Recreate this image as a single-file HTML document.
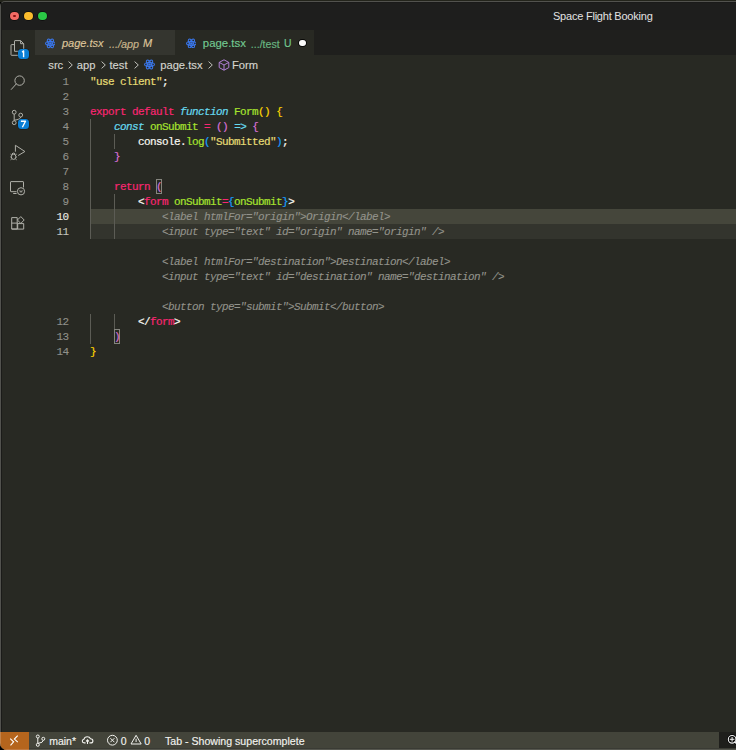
<!DOCTYPE html>
<html><head><meta charset="utf-8">
<style>
*{margin:0;padding:0;box-sizing:border-box}
html,body{width:736px;height:750px;overflow:hidden;background:#000}
#clip{position:absolute;left:0;top:0;width:736px;height:750px;clip-path:inset(1px 0 0 0 round 5px 0 0 7px)}
body{position:relative;font-family:"Liberation Sans",sans-serif}
.a{position:absolute}
#frame{left:0;top:1px;width:800px;height:760px;background:#52524e}
#title{left:1px;top:2px;width:800px;height:28px;background:#1e1e1d;border-top-left-radius:4px;border-top:1px solid #1a1a19}
.tl{position:absolute;width:8.8px;height:8.8px;border-radius:50%;box-shadow:0 0 0 0.7px rgba(0,0,0,.6)}
#titletxt{left:553px;top:10px;font-size:11px;letter-spacing:-0.22px;color:#e2e2e2;white-space:nowrap}
#act{left:1px;top:30px;width:34px;height:702px;background:#282923}
#tabs{left:35px;top:30px;width:766px;height:25px;background:#1f1f1d}
.tab{position:absolute;top:0;height:25px;font-size:11px;white-space:nowrap}
#editor{left:35px;top:55px;width:766px;height:677px;background:#282923}
#status{left:0;top:731.5px;width:800px;height:20px;background:#43443a}
.mono{font-family:"Liberation Mono",monospace;font-size:11px;letter-spacing:-0.6px;line-height:15px;-webkit-text-stroke:0.2px;white-space:pre}
.ln{position:absolute;left:35px;width:33.5px;text-align:right;color:#90908a}
.row{transform:scaleY(1.06);transform-origin:0 10.4px}
.row.gh{transform:none}
.ln{transform:scaleY(1.03);transform-origin:0 10.4px}
.row{position:absolute;left:90px;color:#f8f8f2}
.k{color:#f92672}.s{color:#e6db74}.i{color:#66d9ef;font-style:italic}.g{color:#a6e22e}.w{color:#f8f8f2}.c{color:#66d9ef}
.b1{color:#ffd700}.b2{color:#da70d6}.b3{color:#179fff}
.gh{color:#93938b;font-style:italic;-webkit-text-stroke:0.1px}
.ln{-webkit-text-stroke:0.1px}
.guide{position:absolute;width:1px;background:#5c5c55}
</style></head><body>
<div class="a" style="left:0;top:0;width:736px;height:2px;background:#23241b"></div><div id="clip"><div id="frame" class="a"></div>
<div id="title" class="a"></div>
<div class="tl" style="left:10.1px;top:11.5px;background:#f26a64"></div>
<div class="tl" style="left:24.0px;top:11.5px;background:#fbbc2d"></div>
<div class="tl" style="left:37.9px;top:11.5px;background:#2ac845"></div>
<div class="a" style="left:13.4px;top:14.8px;width:2.3px;height:2.3px;border-radius:50%;background:#8a1010"></div>
<div id="titletxt" class="a">Space Flight Booking</div>
<div id="act" class="a"></div>
<div class="a" style="left:1px;top:3px;width:1px;height:729px;background:#1b1b19"></div>
<div id="tabs" class="a"><div class="tab" style="left:0;width:140px;background:#34352f"></div><div class="tab" style="left:140px;width:139px;background:#282923"></div></div>
<div id="editor" class="a"></div>
<div class="a" style="left:90px;top:208.5px;width:700px;height:15px;background:#45463b"></div>
<div class="a" style="left:90px;top:223.5px;width:700px;height:15px;background:#33342d"></div>
<div class="guide" style="left:90px;top:118.5px;height:120px"></div>
<div class="guide" style="left:90px;top:313.5px;height:30px"></div>
<div class="guide" style="left:114px;top:133.5px;height:15px"></div>
<div class="guide" style="left:114px;top:193.5px;height:45px"></div>
<div class="guide" style="left:114px;top:313.5px;height:30px"></div>
<div class="a" style="left:156px;top:178.5px;width:6px;height:15px;border:1px solid #85857e"></div>
<div class="a" style="left:114px;top:328.5px;width:6px;height:15px;border:1px solid #85857e"></div>
<div class="mono">
<div class="ln" style="top:75.0px">1</div>
<div class="ln" style="top:90.0px">2</div>
<div class="ln" style="top:105.0px">3</div>
<div class="ln" style="top:120.0px">4</div>
<div class="ln" style="top:135.0px">5</div>
<div class="ln" style="top:150.0px">6</div>
<div class="ln" style="top:165.0px">7</div>
<div class="ln" style="top:180.0px">8</div>
<div class="ln" style="top:195.0px">9</div>
<div class="ln" style="top:210.0px;color:#ececE6">10</div>
<div class="ln" style="top:225.0px;color:#c4c4be">11</div>
<div class="ln" style="top:315.0px">12</div>
<div class="ln" style="top:330.0px">13</div>
<div class="ln" style="top:345.0px">14</div>
<div class="row" style="top:75.0px"><span class="s">"use client"</span>;</div>
<div class="row" style="top:105.0px"><span class="k">export</span> <span class="k">default</span> <span class="i">function</span> <span class="g">Form</span><span class="b1">()</span> <span class="b1">{</span></div>
<div class="row" style="top:120.0px">    <span class="i">const</span> <span class="g">onSubmit</span> <span class="k">=</span> <span class="b2">()</span> <span class="c">=&gt;</span> <span class="b2">{</span></div>
<div class="row" style="top:135.0px">        console.<span class="g">log</span><span class="b3">(</span><span class="s">"Submitted"</span><span class="b3">)</span>;</div>
<div class="row" style="top:150.0px">    <span class="b2">}</span></div>
<div class="row" style="top:180.0px">    <span class="k">return</span> <span class="b2">(</span></div>
<div class="row" style="top:195.0px">        &lt;<span class="k">form</span> <span class="g">onSubmit</span><span class="k">=</span><span class="b3">{</span><span class="g">onSubmit</span><span class="b3">}</span>&gt;</div>
<div class="row" style="top:315.0px">        &lt;/<span class="k">form</span>&gt;</div>
<div class="row" style="top:330.0px">    <span class="b2">)</span></div>
<div class="row" style="top:345.0px"><span class="b1">}</span></div>
<div class="row gh" style="top:210.0px">            &lt;label htmlFor="origin"&gt;Origin&lt;/label&gt;</div>
<div class="row gh" style="top:225.0px">            &lt;input type="text" id="origin" name="origin" /&gt;</div>
<div class="row gh" style="top:255.0px">            &lt;label htmlFor="destination"&gt;Destination&lt;/label&gt;</div>
<div class="row gh" style="top:270.0px">            &lt;input type="text" id="destination" name="destination" /&gt;</div>
<div class="row gh" style="top:300.0px">            &lt;button type="submit"&gt;Submit&lt;/button&gt;</div>
</div>
<div id="status" class="a"><div class="a" style="left:0;top:0;width:28.5px;height:20px;background:#b5651d"></div></div>
<svg class="a" style="left:0px;top:30px" width="36" height="36" viewBox="0 0 36 36"><path fill="none" stroke="#b0b0a9" stroke-width="1" d="M14.5 14.6 H11.5 Q11 14.6 11 15.1 V24.8 Q11 25.3 11.5 25.3 H18.5"/><path fill="none" stroke="#b0b0a9" stroke-width="1" d="M14.5 21.3 V11.1 Q14.5 10.6 15 10.6 H20.6 L23.7 13.7 V21.3 Z"/><path fill="none" stroke="#b0b0a9" stroke-width="1" d="M20.6 10.6 V13.7 H23.7"/></svg>
<svg class="a" style="left:0px;top:66px" width="36" height="36" viewBox="0 0 36 36"><circle fill="none" stroke="#b0b0a9" stroke-width="1" cx="19.6" cy="14.6" r="4.7"/><path fill="none" stroke="#b0b0a9" stroke-width="1" stroke-linecap="round" d="M16.2 18 L11.3 23.4"/></svg>
<svg class="a" style="left:0px;top:102px" width="36" height="36" viewBox="0 0 36 36"><circle fill="none" stroke="#b0b0a9" stroke-width="1" cx="14.2" cy="10.2" r="1.9"/><circle fill="none" stroke="#b0b0a9" stroke-width="1" cx="14.2" cy="20.7" r="1.9"/><circle fill="none" stroke="#b0b0a9" stroke-width="1" cx="20.7" cy="13.1" r="1.9"/><path fill="none" stroke="#b0b0a9" stroke-width="1" d="M14.2 12.1 V18.8"/><path fill="none" stroke="#b0b0a9" stroke-width="1" d="M20.7 15 Q20.7 17.5 14.2 18.2"/></svg>
<svg class="a" style="left:0px;top:138px" width="36" height="36" viewBox="0 0 36 36"><path fill="none" stroke="#b0b0a9" stroke-width="1" stroke-linejoin="round" d="M15.4 13.7 V7.3 L24.9 13.5 L18.2 17.5"/><ellipse fill="none" stroke="#b0b0a9" stroke-width="1" cx="13.6" cy="18.8" rx="2.3" ry="2.6"/><path fill="none" stroke="#b0b0a9" stroke-width="1" d="M10.6 16.2 L11.8 17 M16.6 16.2 L15.4 17 M10.4 19 H11.3 M16.8 19 H15.9 M10.6 21.8 L11.7 21 M16.6 21.8 L15.5 21 M12 15.7 Q13.6 14.4 15.2 15.7"/></svg>
<svg class="a" style="left:0px;top:174px" width="36" height="36" viewBox="0 0 36 36"><path fill="none" stroke="#b0b0a9" stroke-width="1" d="M16.5 17.7 H11 Q10.5 17.7 10.5 17.2 V8.1 Q10.5 7.6 11 7.6 H23 Q23.5 7.6 23.5 8.1 V13.5"/><path fill="none" stroke="#b0b0a9" stroke-width="1" d="M13.2 19.5 H16.6"/><circle fill="none" stroke="#b0b0a9" stroke-width="1" cx="21" cy="17.3" r="3.6"/><path stroke="#b0b0a9" stroke-width="0.7" fill="none" d="M19.7 16.2 L20.4 18.3 L21 16.8 L21.6 18.3 L22.3 16.2"/></svg>
<svg class="a" style="left:0px;top:210px" width="36" height="36" viewBox="0 0 36 36"><path fill="none" stroke="#b0b0a9" stroke-width="1" d="M11.7 7.6 H17.2 V19 H11.7 Z M11.7 13.1 H17.7 M11.7 19.1 H23.7 V13.6 H17.7 V19.1"/><path fill="none" stroke="#b0b0a9" stroke-width="1" d="M20.8 6.6 L24.2 10 L20.8 13.4 L17.4 10 Z"/></svg>
<div class="a" style="left:18.2px;top:48.8px;width:10.4px;height:10.4px;border-radius:3.5px;background:#0a7fd6;box-shadow:0 0 0 0.6px rgba(0,0,0,.35)"></div>
<svg class="a" style="left:18.2px;top:48.8px" width="10.4" height="10.4" viewBox="0 0 10.4 10.4"><path d="M4.1 3.2 L5.6 1.9 V8.3" fill="none" stroke="#fff" stroke-width="1.4" stroke-linejoin="round"/></svg>
<div class="a" style="left:18.2px;top:118.7px;width:10.4px;height:10.4px;border-radius:3.5px;background:#0a7fd6;box-shadow:0 0 0 0.6px rgba(0,0,0,.35)"></div>
<svg class="a" style="left:18.2px;top:118.7px" width="10.4" height="10.4" viewBox="0 0 10.4 10.4"><path d="M2.9 2.3 H7.5 L4.4 8.3" fill="none" stroke="#fff" stroke-width="1.4" stroke-linejoin="round"/></svg>
<svg class="a" style="left:44.7px;top:37.800000000000004px" width="10.8" height="10.8" viewBox="0 0 24 24"><g fill="none" stroke="#3a78ef" stroke-width="2.3"><ellipse cx="12" cy="12" rx="10.8" ry="4.3"/><ellipse cx="12" cy="12" rx="10.8" ry="4.3" transform="rotate(60 12 12)"/><ellipse cx="12" cy="12" rx="10.8" ry="4.3" transform="rotate(120 12 12)"/></g><circle cx="12" cy="12" r="2.8" fill="#3a78ef"/></svg>
<svg class="a" style="left:185.7px;top:37.6px" width="10.8" height="10.8" viewBox="0 0 24 24"><g fill="none" stroke="#3a78ef" stroke-width="2.3"><ellipse cx="12" cy="12" rx="10.8" ry="4.3"/><ellipse cx="12" cy="12" rx="10.8" ry="4.3" transform="rotate(60 12 12)"/><ellipse cx="12" cy="12" rx="10.8" ry="4.3" transform="rotate(120 12 12)"/></g><circle cx="12" cy="12" r="2.8" fill="#3a78ef"/></svg>
<div class="a" style="left:62px;top:37px;white-space:nowrap;-webkit-text-stroke:0.15px;font-size:11px;font-style:italic;color:#dec59a">page.tsx</div>
<div class="a" style="left:109px;top:37.6px;white-space:nowrap;-webkit-text-stroke:0.15px;font-size:10.8px;font-style:italic;color:#dec59a;opacity:.88">.../app</div>
<div class="a" style="left:143px;top:37px;white-space:nowrap;-webkit-text-stroke:0.15px;font-size:11px;font-style:italic;color:#dec59a">M</div>
<div class="a" style="left:202.8px;top:37px;white-space:nowrap;-webkit-text-stroke:0.15px;font-size:11.4px;color:#73c991">page.tsx</div>
<div class="a" style="left:250.8px;top:37.6px;white-space:nowrap;-webkit-text-stroke:0.15px;font-size:10.6px;color:#73c991;opacity:.88">.../test</div>
<div class="a" style="left:284px;top:37.5px;white-space:nowrap;-webkit-text-stroke:0.15px;font-size:10.4px;color:#73c991">U</div>
<div class="a" style="left:299.4px;top:39.6px;width:6.8px;height:6.8px;border-radius:50%;background:#fafafa;box-shadow:0 0 0 0.8px #000"></div>
<div class="a" style="left:48.3px;top:58.5px;white-space:nowrap;-webkit-text-stroke:0.15px;font-size:11.2px;color:#d4d4ce">src</div>
<div class="a" style="left:76.8px;top:58.5px;white-space:nowrap;-webkit-text-stroke:0.15px;font-size:11.2px;color:#d4d4ce">app</div>
<div class="a" style="left:109.5px;top:58.5px;white-space:nowrap;-webkit-text-stroke:0.15px;font-size:11.2px;color:#d4d4ce">test</div>
<div class="a" style="left:160.2px;top:58.5px;white-space:nowrap;-webkit-text-stroke:0.15px;font-size:11.2px;color:#d4d4ce">page.tsx</div>
<div class="a" style="left:232px;top:58.5px;white-space:nowrap;-webkit-text-stroke:0.15px;font-size:11.2px;color:#d4d4ce">Form</div>
<svg class="a" style="left:68.4px;top:61px" width="5" height="8" viewBox="0 0 5 8"><path fill="none" stroke="#d4d4ce" stroke-width="0.9" d="M0.6 0.6 L4.3 4 L0.6 7.4"/></svg>
<svg class="a" style="left:100.9px;top:61px" width="5" height="8" viewBox="0 0 5 8"><path fill="none" stroke="#d4d4ce" stroke-width="0.9" d="M0.6 0.6 L4.3 4 L0.6 7.4"/></svg>
<svg class="a" style="left:133.5px;top:61px" width="5" height="8" viewBox="0 0 5 8"><path fill="none" stroke="#d4d4ce" stroke-width="0.9" d="M0.6 0.6 L4.3 4 L0.6 7.4"/></svg>
<svg class="a" style="left:208.3px;top:61px" width="5" height="8" viewBox="0 0 5 8"><path fill="none" stroke="#d4d4ce" stroke-width="0.9" d="M0.6 0.6 L4.3 4 L0.6 7.4"/></svg>
<svg class="a" style="left:143.8px;top:59.3px" width="11" height="11" viewBox="0 0 24 24"><g fill="none" stroke="#3a78ef" stroke-width="2.3"><ellipse cx="12" cy="12" rx="10.8" ry="4.3"/><ellipse cx="12" cy="12" rx="10.8" ry="4.3" transform="rotate(60 12 12)"/><ellipse cx="12" cy="12" rx="10.8" ry="4.3" transform="rotate(120 12 12)"/></g><circle cx="12" cy="12" r="2.8" fill="#3a78ef"/></svg>
<svg class="a" style="left:217.5px;top:58.5px" width="12" height="12" viewBox="0 0 12 12"><g fill="none" stroke="#b180d7" stroke-width="1" stroke-linejoin="round"><path d="M6 0.8 L10.8 3.4 V8.6 L6 11.2 L1.2 8.6 V3.4 Z"/><path d="M1.2 3.4 L6 6 L10.8 3.4 M6 6 V11.2"/></g></svg>
<svg class="a" style="left:0px;top:731.5px" width="29" height="19" viewBox="0 0 29 19"><path fill="none" stroke="#fff" stroke-width="1.1" d="M10.2 6.7 L13.6 9.9 L10.5 13.3 M17.7 3.7 L14.4 7.1 L17.8 10.2"/></svg>
<svg class="a" style="left:30px;top:730.5px" width="20" height="19" viewBox="0 0 20 19"><g fill="none" stroke="#f2f2ee" stroke-width="1"><circle cx="7.8" cy="5.5" r="1.5"/><circle cx="7.8" cy="13.8" r="1.5"/><circle cx="13.3" cy="7.8" r="1.5"/><path d="M7.8 7 V12.3 M13.3 9.3 Q13.3 11.8 7.9 12.4"/></g></svg>
<div class="a" style="left:49.2px;top:735px;white-space:nowrap;-webkit-text-stroke:0.15px;font-size:10.5px;color:#f2f2ee">main*</div>
<svg class="a" style="left:80px;top:731.3px" width="16" height="19" viewBox="0 0 16 19"><g fill="none" stroke="#f2f2ee" stroke-width="1.1"><path d="M5.6 11.9 H4.2 Q2.3 11.9 2.3 10.1 Q2.3 8.5 3.9 8.3 Q4.5 5.7 7.3 5.7 Q9.6 5.7 10.5 7.7 Q12.9 7.8 12.9 9.9 Q12.9 11.9 10.8 11.9 H9.4"/><path d="M7.5 13 V8.9 M6.1 10.3 L7.5 8.9 L8.9 10.3"/></g></svg>
<svg class="a" style="left:105px;top:730.5px" width="14" height="19" viewBox="0 0 14 19"><g fill="none" stroke="#f2f2ee" stroke-width="1"><circle cx="7.4" cy="9.2" r="4.9"/><path d="M5.4 7.2 L9.4 11.2 M9.4 7.2 L5.4 11.2"/></g></svg>
<div class="a" style="left:120.8px;top:735px;white-space:nowrap;-webkit-text-stroke:0.15px;font-size:10.5px;color:#f2f2ee">0</div>
<svg class="a" style="left:129px;top:730.5px" width="14" height="19" viewBox="0 0 14 19"><g fill="none" stroke="#f2f2ee" stroke-width="1" stroke-linejoin="round"><path d="M7.1 4.3 L12.2 13 H2 Z"/></g><path d="M6.6 7.8 H7.6 V11 H6.6 Z" fill="#f2f2ee"/></svg>
<div class="a" style="left:144.2px;top:735px;white-space:nowrap;-webkit-text-stroke:0.15px;font-size:10.5px;color:#f2f2ee">0</div>
<div class="a" style="left:165px;top:735px;white-space:nowrap;-webkit-text-stroke:0.15px;font-size:10.6px;color:#f2f2ee">Tab - Showing supercomplete</div>
<div class="a" style="left:719px;top:731.5px;width:17px;height:17px;background:#1f1f1c"></div>
<div class="a" style="left:28.5px;top:748px;width:708px;height:1px;background:#3a3b34"></div>
<div class="a" style="left:28.5px;top:749px;width:708px;height:1px;background:#56574f"></div>
<div class="a" style="left:0;top:749px;width:28.5px;height:1px;background:#c07a40"></div>
<div class="a" style="left:0;top:731.5px;width:1px;height:15px;background:rgba(255,255,255,.2)"></div>
<svg class="a" style="left:724px;top:731px" width="12" height="17" viewBox="0 0 12 17"><g fill="none" stroke-linecap="round"><circle cx="8.1" cy="8.3" r="3.8" stroke="#000" stroke-width="2.4"/><path d="M10.8 11 L14 14.2" stroke="#000" stroke-width="2.6"/><circle cx="8.1" cy="8.3" r="3.8" stroke="#f4f4f4" stroke-width="1.1"/><path d="M10.8 11 L14 14.2" stroke="#f4f4f4" stroke-width="1.2"/><path d="M6.2 8.3 H10 M8.1 6.4 V10.2" stroke="#f4f4f4" stroke-width="1"/></g></svg>
</div></body></html>
